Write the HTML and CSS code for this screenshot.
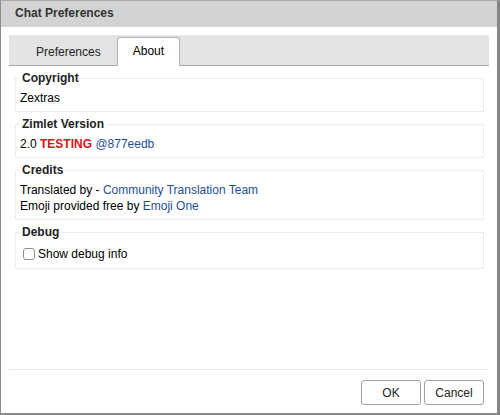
FILE: index.html
```html
<!DOCTYPE html>
<html>
<head>
<meta charset="utf-8">
<title>Chat Preferences</title>
<link rel="stylesheet" href="styles.css">
</head>
<body>
<div class="dialog">
  <div class="titlebar">Chat Preferences</div>
  <div class="main">
    <div class="tabbar">
      <div class="tab">Preferences</div>
      <div class="tab active">About</div>
    </div>
    <div class="tabcontent">
      <fieldset class="group">
        <legend>Copyright</legend>
        <div class="line">Zextras</div>
      </fieldset>
      <fieldset class="group">
        <legend>Zimlet Version</legend>
        <div class="line">2.0 <span class="testing">TESTING</span> <a class="link" href="#">@877eedb</a></div>
      </fieldset>
      <fieldset class="group">
        <legend>Credits</legend>
        <div class="line">Translated by - <a class="link" href="#">Community Translation Team</a></div>
        <div class="line">Emoji provided free by <a class="link" href="#">Emoji One</a></div>
      </fieldset>
      <fieldset class="group">
        <legend>Debug</legend>
        <label class="check"><input type="checkbox" class="box"><span>Show debug info</span></label>
      </fieldset>
    </div>
  </div>
  <div class="footer">
    <button class="btn">OK</button>
    <button class="btn">Cancel</button>
  </div>
</div>
</body>
</html>
```

FILE: styles.css
```css
html, body {
  margin: 0;
  padding: 0;
  background: #ffffff;
}

body {
  font-family: "Liberation Sans", Arial, sans-serif;
  font-size: 12px;
  color: #000;
}

.dialog {
  width: 500px;
  height: 415px;
  box-sizing: border-box;
  border-top: 1px solid #a8a8a8;
  border-left: 1px solid #8c8c8c;
  border-right: 3px solid #858585;
  border-bottom: 2px solid #8a8a8a;
  background: #fff;
  display: flex;
  flex-direction: column;
}

.titlebar {
  height: 26px;
  box-sizing: border-box;
  background: #d3d3d3;
  padding-left: 14px;
  line-height: 24px;
  font-weight: bold;
  color: #333;
}

.main {
  flex: 1;
  padding: 8px 8px 0 8px;
}

.tabbar {
  height: 31px;
  box-sizing: border-box;
  background: #e4e4e4;
  border-bottom: 1px solid #a9a9a9;
  padding-left: 11px;
  display: flex;
  align-items: flex-end;
}

.tab {
  height: 28px;
  box-sizing: border-box;
  padding: 0 15px;
  border: 1px solid transparent;
  border-bottom: none;
  line-height: 26px;
  color: #222;
  margin-bottom: -1px;
}

.tab.active {
  height: 29px;
  background: #fff;
  border-color: #b4b4b4;
  border-radius: 3px 3px 0 0;
  color: #000;
}

.tabcontent {
  padding: 5px 5px 0 6px;
}

.group {
  margin: 0 0 5px 0;
  padding: 5px 4px 5px 4px;
  border: 1px solid #ececec;
  min-width: 0;
}

.group legend {
  padding: 0 2px;
  font-weight: bold;
  line-height: 14px;
  color: #222;
}

.line {
  line-height: 16px;
}

.testing {
  color: #e0101a;
  font-weight: bold;
}

.link {
  color: #1f4e94;
  text-decoration: none;
}

.check {
  display: flex;
  align-items: center;
  height: 19px;
}

.box {
  -webkit-appearance: none;
  appearance: none;
  width: 12px;
  height: 12px;
  margin: 0 3px 0 3px;
  border: 1px solid #8e8e8e;
  border-radius: 3px;
  background: #fff;
  box-sizing: border-box;
}

.footer {
  margin: 0 8px;
  border-top: 1px solid #e8e8e8;
  height: 44px;
  box-sizing: border-box;
  padding: 10px 5px 0 0;
  display: flex;
  justify-content: flex-end;
  align-items: flex-start;
  gap: 3px;
}

.btn {
  width: 60px;
  height: 25px;
  background: #fff;
  border: 1px solid #a3a3a3;
  border-radius: 3px;
  font-family: "Liberation Sans", Arial, sans-serif;
  font-size: 12px;
  color: #222;
  padding: 0;
}
```
